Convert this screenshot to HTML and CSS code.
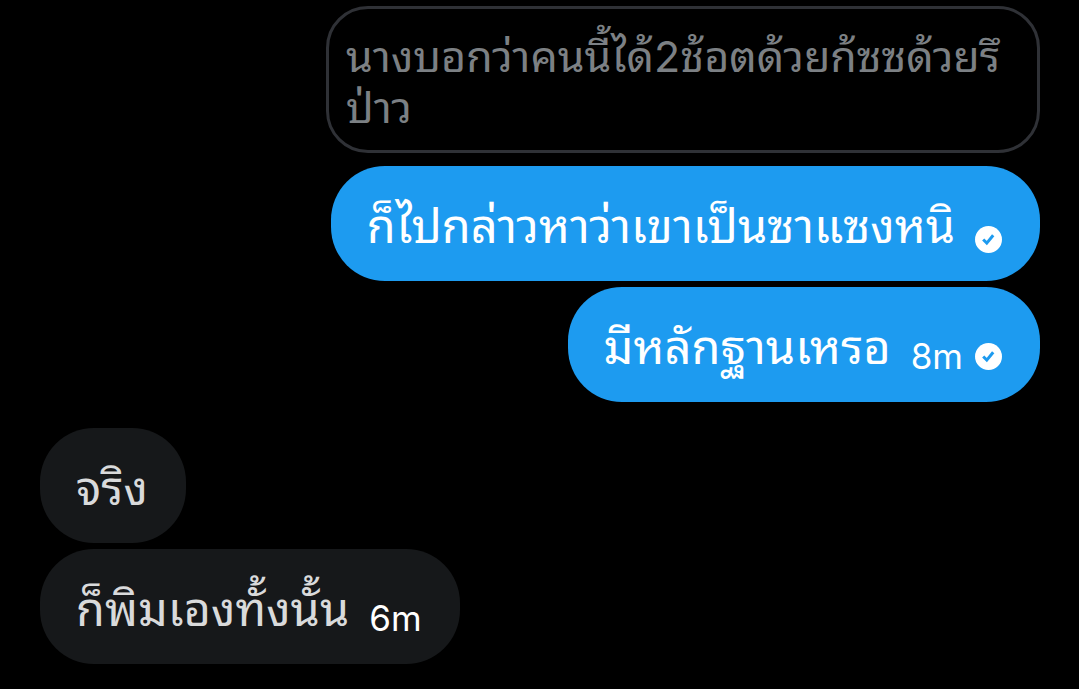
FILE: index.html
```html
<!DOCTYPE html>
<html lang="th">
<head>
<meta charset="utf-8">
<title>Messages</title>
<link rel="stylesheet" href="styles.css">
</head>
<body>

    <main class="chat">
        <div class="message sent quote">
            <p>นางบอกว่าคนนี้ได้2ช้อตด้วยก้ซซด้วยรึ<wbr>ป่าว</p>
        </div>

        <div class="message sent bubble blue">
            <p>ก็ไปกล่าวหาว่าเขาเป็นซาแซงหนิ</p>
            <div class="status">
                <svg class="check" viewBox="0 0 27 27" role="img" aria-label="Sent">
                    <circle cx="13.5" cy="13.5" r="13.5"/>
                    <path d="M8.2 13.5l3.6 3.6 6.4-7.8"/>
                </svg>
            </div>
        </div>

        <div class="message sent bubble blue">
            <p>มีหลักฐานเหรอ</p>
            <div class="status">
                <time>8m</time>
                <svg class="check" viewBox="0 0 27 27" role="img" aria-label="Sent">
                    <circle cx="13.5" cy="13.5" r="13.5"/>
                    <path d="M8.2 13.5l3.6 3.6 6.4-7.8"/>
                </svg>
            </div>
        </div>

        <div class="message received bubble gray first">
            <p>จริง</p>
        </div>

        <div class="message received bubble gray">
            <p>ก็พิมเองทั้งนั้น</p>
            <div class="status">
                <time>6m</time>
            </div>
        </div>
    </main>

</body>
</html>
```

FILE: styles.css
```css
body {
    background-color: black;
    color: white;
    font-family: Inter, "Noto Sans Thai Looped", Loma, Waree, "Noto Sans", sans-serif;
    margin: 0;
}

p {
    margin: 0;
}

.chat {
    display: flex;
    flex-direction: column;
    gap: 6px;
    padding: 6px 39px 25px 40px;
}

.message {
    box-sizing: border-box;
}

.sent {
    align-self: flex-end;
}

.received {
    align-self: flex-start;
}

.quote {
    border: 3px solid #2f3136;
    border-radius: 42px;
    color: #7c8084;
    font-size: 43px;
    line-height: 51px;
    margin-bottom: 7px;
    max-width: 714px;
    padding: 22px 17px 17px;
}

.bubble {
    align-items: flex-end;
    border-radius: 54px;
    display: flex;
    font-size: 47px;
    gap: 20px;
    line-height: 54px;
    padding: 33px 38px 28px 36px;
}

.blue {
    background-color: #1d9bf0;
}

.gray {
    background-color: #16181a;
    color: #d9dadb;
}

.first {
    margin-top: 20px;
}

.status {
    align-items: center;
    display: flex;
    gap: 12px;
    line-height: 36px;
}

time {
    color: white;
    font-size: 35px;
}

.check {
    fill: white;
    height: 27px;
    width: 27px;
}

.check path {
    fill: none;
    stroke: #1d9bf0;
    stroke-width: 3;
}
```
